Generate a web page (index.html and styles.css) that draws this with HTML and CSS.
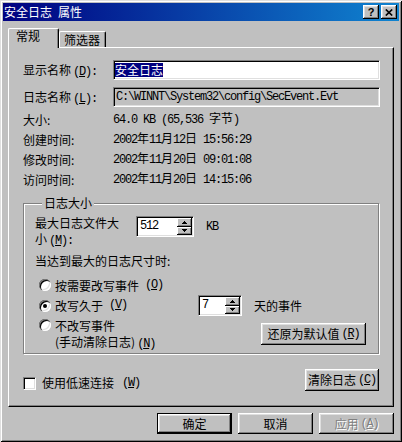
FILE: index.html
```html
<!DOCTYPE html>
<html lang="zh-CN">
<head>
<meta charset="UTF-8" />
<title>安全日志 属性</title>
<link rel="stylesheet" href="styles.css">
</head>
<body>

<div class="window">
  <div class="titlebar">
    <span class="title">安全日志&ensp;属性</span>
    <div class="caption-btns">
      <span class="cap-btn help">?</span>
      <span class="cap-btn">
        <svg width="8" height="7" viewBox="0 0 8 7"><path d="M0.8 0.5L7.2 6.5M7.2 0.5L0.8 6.5" stroke="#000" stroke-width="1.7" fill="none"/></svg>
      </span>
    </div>
  </div>

  <div class="client">
    <div class="tabs">
      <div class="tab active">常规</div>
      <div class="tab">筛选器</div>
    </div>

    <div class="panel">
      <div class="field-row">
        <span class="lbl">显示名称<span class="acc">(<u>D</u>):</span></span>
        <div class="edit"><span class="sel">安全日志</span></div>
      </div>
      <div class="field-row">
        <span class="lbl">日志名称<span class="acc">(<u>L</u>):</span></span>
        <div class="edit readonly mono">C:\WINNT\System32\config\SecEvent.Evt</div>
      </div>

      <div class="info">
        <span class="k">大小:</span>
        <span class="mono">64.0 KB (65,536 <span class="cj">字节</span>)</span>
        <span class="k">创建时间:</span>
        <span class="mono">2002<span class="cj">年</span>11<span class="cj">月</span>12<span class="cj">日</span> 15:56:29</span>
        <span class="k">修改时间:</span>
        <span class="mono">2002<span class="cj">年</span>11<span class="cj">月</span>20<span class="cj">日</span> 09:01:08</span>
        <span class="k">访问时间:</span>
        <span class="mono">2002<span class="cj">年</span>11<span class="cj">月</span>20<span class="cj">日</span> 14:15:06</span>
      </div>

      <div class="group">
        <div class="group-title">日志大小</div>

        <div class="max-row">
          <span class="max-label">最大日志文件大<br>小<span class="acc">(<u>M</u>):</span></span>
          <div class="spin size-spin">
            <span class="spin-text mono">512</span>
            <span class="spin-btns">
              <span class="spin-btn"><svg width="5" height="3" viewBox="0 0 5 3"><path d="M2 0h1v1h1v1h1v1H0V2h1V1h1z"/></svg></span>
              <span class="spin-btn"><svg width="5" height="3" viewBox="0 0 5 3"><path d="M0 0h5v1H4v1H3v1H2V2H1V1H0z"/></svg></span>
            </span>
          </div>
          <span class="kb mono">KB</span>
        </div>

        <div class="when">当达到最大的日志尺寸时:</div>

        <div class="opt opt1">
          <span class="radio-item"><span class="radio"></span>按需要改写事件<span class="acc">(<u>O</u>)</span></span>
        </div>

        <div class="opt opt2">
          <span class="radio-item wide"><span class="radio checked"></span>改写久于<span class="acc">(<u>V</u>)</span></span>
          <div class="spin days-spin">
            <span class="spin-text mono">7</span>
            <span class="spin-btns">
              <span class="spin-btn"><svg width="5" height="3" viewBox="0 0 5 3"><path d="M2 0h1v1h1v1h1v1H0V2h1V1h1z"/></svg></span>
              <span class="spin-btn"><svg width="5" height="3" viewBox="0 0 5 3"><path d="M0 0h5v1H4v1H3v1H2V2H1V1H0z"/></svg></span>
            </span>
          </div>
          <span class="days">天的事件</span>
        </div>

        <div class="opt opt3">
          <span class="radio-item top"><span class="radio"></span><span>不改写事件<br>(手动清除日志)<span class="acc">(<u>N</u>)</span></span></span>
          <span class="btn restore">还原为默认值<span class="acc">(<u>R</u>)</span></span>
        </div>
      </div>

      <div class="bottom-row">
        <span class="check-item"><span class="checkbox"></span>使用低速连接<span class="acc">(<u>W</u>)</span></span>
        <span class="btn clear">清除日志<span class="acc">(<u>C</u>)</span></span>
      </div>
    </div>

    <div class="dialog-btns">
      <span class="btn default">确定</span>
      <span class="btn">取消</span>
      <span class="btn disabled">应用<span class="acc">(<u>A</u>)</span></span>
    </div>
  </div>
</div>

</body>
</html>
```

FILE: styles.css
```css
* {
  box-sizing: border-box;
}

body {
  margin: 0;
  background: #c0c0c0;
  font-family: "Noto Sans CJK SC", sans-serif;
  font-size: 12px;
  color: #000;
}

/* Window frame */
.window {
  width: 402px;
  height: 442px;
  padding: 3px;
  background: #c0c0c0;
  box-shadow: inset 1px 1px #dfdfdf, inset -1px -1px #000, inset 2px 2px #fff, inset -2px -2px #808080;
}

.titlebar {
  height: 18px;
  display: flex;
  align-items: center;
  justify-content: space-between;
  padding: 0 2px 0 1px;
  background: linear-gradient(90deg, #000080, #1084d0);
  color: #fff;
}

.title {
  line-height: 18px;
}

.caption-btns {
  display: flex;
  gap: 2px;
}

.cap-btn {
  width: 16px;
  height: 14px;
  display: flex;
  align-items: center;
  justify-content: center;
  background: #c0c0c0;
  box-shadow: inset -1px -1px #000, inset 1px 1px #fff, inset -2px -2px #808080, inset 2px 2px #dfdfdf;
}

.cap-btn.help {
  font-family: "Liberation Sans", sans-serif;
  font-weight: bold;
  font-size: 11px;
  line-height: 14px;
  color: #000;
}

.client {
  padding: 7px 0 0 5px;
}

/* Tabs */
.tabs {
  display: flex;
  align-items: flex-end;
  height: 19px;
}

.tab {
  width: 47px;
  height: 16px;
  padding: 1px 0 0 4px;
  line-height: 14px;
  background: #c0c0c0;
  border-top: 1px solid #fff;
  border-left: 1px solid #fff;
  border-right: 1px solid #000;
  border-radius: 2px 2px 0 0;
  box-shadow: inset -1px 0 #808080;
}

.tab.active {
  width: 51px;
  height: 20px;
  padding: 0 0 0 7px;
  margin-bottom: -1px;
  position: relative;
  z-index: 1;
}

.panel {
  width: 386px;
  height: 360px;
  padding: 12px 0 0 14px;
  border-top: 1px solid #fff;
  border-left: 1px solid #fff;
  border-right: 1px solid #000;
  border-bottom: 1px solid #000;
  box-shadow: inset -1px -1px #808080;
}

/* Text helpers */
.mono {
  font-family: "Liberation Mono", monospace;
  font-size: 12px;
  letter-spacing: -1.2px;
}

.mono .cj {
  font-family: "Noto Sans CJK SC", sans-serif;
  letter-spacing: 0;
}

.acc {
  font-family: "Liberation Mono", monospace;
  letter-spacing: -1.2px;
  margin-left: 2px;
}

.acc u {
  text-underline-offset: 1px;
}

/* Name fields */
.field-row {
  display: flex;
  align-items: center;
  height: 20px;
}

.field-row + .field-row {
  margin-top: 7px;
}

.lbl {
  width: 90px;
  flex: none;
}

.edit {
  width: 267px;
  height: 20px;
  display: flex;
  align-items: center;
  padding-left: 1px;
  background: #fff;
  border-top: 1px solid #808080;
  border-left: 1px solid #808080;
  border-bottom: 1px solid #fff;
  border-right: 1px solid #fff;
  box-shadow: inset 1px 1px #000, inset -1px -1px #dfdfdf;
}

.edit.readonly {
  background: #c0c0c0;
  padding-left: 2px;
}

.sel {
  background: #000080;
  color: #fff;
  line-height: 14px;
}

/* Size / dates */
.info {
  display: grid;
  grid-template-columns: 90px auto;
  grid-auto-rows: 20px;
  align-items: center;
  margin-top: 1px;
}

.info .k {
  padding-top: 3px;
}

/* Group box */
.group {
  width: 356px;
  height: 151px;
  margin-top: 15px;
  padding: 0 12px 0 11px;
  border: 1px solid #808080;
  box-shadow: inset 1px 1px #fff, 1px 1px #fff;
}

.group-title {
  width: fit-content;
  margin: -8px 0 0 7px;
  padding: 0 2px;
  line-height: 14px;
  background: #c0c0c0;
}

.max-row {
  display: flex;
  align-items: flex-start;
  margin-top: 6px;
}

.max-label {
  width: 101px;
  margin-top: -1px;
  line-height: 16px;
}

.kb {
  margin: 5px 0 0 12px;
  line-height: 13px;
}

.spin {
  display: flex;
  height: 21px;
  background: #fff;
  border-top: 1px solid #808080;
  border-left: 1px solid #808080;
  border-bottom: 1px solid #fff;
  border-right: 1px solid #fff;
  box-shadow: inset 1px 1px #000, inset -1px -1px #dfdfdf;
  padding: 1px;
}

.size-spin {
  width: 58px;
}

.days-spin {
  width: 44px;
}

.spin-text {
  flex: 1;
  padding: 1px 0 0 2px;
  line-height: 15px;
}

.spin-btns {
  width: 15px;
  display: flex;
  flex-direction: column;
}

.spin-btn {
  flex: 1;
  display: flex;
  align-items: center;
  justify-content: center;
  background: #c0c0c0;
  box-shadow: inset -1px -1px #000, inset 1px 1px #fff, inset -2px -2px #808080;
}

.when {
  margin-top: 4px;
  line-height: 16px;
}

.opt {
  display: flex;
  align-items: center;
}

.opt1 {
  margin-top: 8px;
  height: 16px;
}

.opt2 {
  margin-top: 2px;
  height: 21px;
}

.opt3 {
  margin-top: 2px;
  align-items: flex-start;
}

.radio-item {
  display: flex;
  align-items: center;
  gap: 4px;
  margin-left: 4px;
  line-height: 15px;
}

.radio-item.wide {
  width: 159px;
}

.radio-item.top {
  align-items: flex-start;
  line-height: 16px;
}

.radio-item.top .radio {
  margin-top: 1px;
}

.radio {
  width: 12px;
  height: 12px;
  flex: none;
  border-radius: 50%;
  background: #fff;
  box-shadow: inset 1px 1px #808080, inset 2px 2px #000, inset -1px -1px #fff, inset -2px -2px #dfdfdf;
  display: flex;
  align-items: center;
  justify-content: center;
}

.radio.checked::after {
  content: "";
  width: 4px;
  height: 4px;
  border-radius: 50%;
  background: #000;
}

.days {
  margin-left: 12px;
}

/* Buttons */
.btn {
  display: flex;
  align-items: center;
  justify-content: center;
  height: 21px;
  line-height: 14px;
  background: #c0c0c0;
  box-shadow: inset -1px -1px #000, inset 1px 1px #fff, inset -2px -2px #808080, inset 2px 2px #dfdfdf;
}

.btn.restore {
  width: 105px;
  height: 22px;
  margin: 5px 0 0 auto;
}

.bottom-row {
  width: 356px;
  display: flex;
  align-items: flex-start;
  margin-top: 15px;
}

.check-item {
  display: flex;
  align-items: center;
  gap: 6px;
  margin-top: 7px;
  line-height: 14px;
}

.checkbox {
  width: 13px;
  height: 13px;
  background: #fff;
  border-top: 1px solid #808080;
  border-left: 1px solid #808080;
  border-bottom: 1px solid #fff;
  border-right: 1px solid #fff;
  box-shadow: inset 1px 1px #000, inset -1px -1px #dfdfdf;
}

.btn.clear {
  width: 74px;
  height: 22px;
  margin-left: auto;
}

.dialog-btns {
  width: 386px;
  margin-top: 6px;
  display: flex;
  justify-content: flex-end;
  gap: 6px;
}

.dialog-btns .btn {
  width: 75px;
}

.btn.default {
  border: 1px solid #000;
}

.btn.disabled {
  color: #808080;
  text-shadow: 1px 1px #fff;
}
```
